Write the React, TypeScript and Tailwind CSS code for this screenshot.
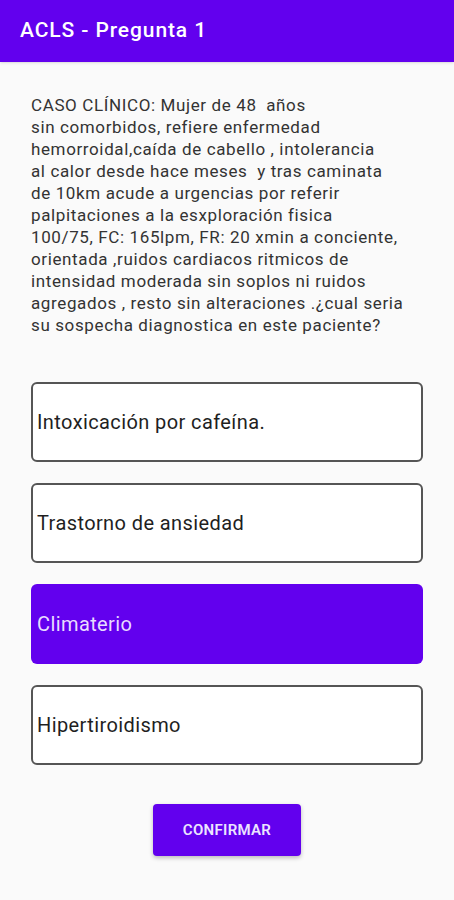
import { useState } from 'react'

const question =
  'CASO CLÍNICO: Mujer de 48  años\nsin comorbidos, refiere enfermedad\nhemorroidal,caída de cabello , intolerancia\nal calor desde hace meses  y tras caminata\nde 10km acude a urgencias por referir\npalpitaciones a la esxploración fisica\n100/75, FC: 165lpm, FR: 20 xmin a conciente,\norientada ,ruidos cardiacos ritmicos de\nintensidad moderada sin soplos ni ruidos\nagregados , resto sin alteraciones .¿cual seria\nsu sospecha diagnostica en este paciente?'

const options = [
  'Intoxicación por cafeína.',
  'Trastorno de ansiedad',
  'Climaterio',
  'Hipertiroidismo',
]

export default function App() {
  const [selected, setSelected] = useState(2)

  return (
    <div className="min-h-[900px] w-[454px] bg-[#fafafa] font-['Roboto',sans-serif]">
      <header className="h-[62px] bg-[#6200ee] px-5 flex items-center shadow-sm">
        <h1 className="text-[21px] font-medium text-white tracking-[0.9px]">ACLS - Pregunta 1</h1>
      </header>

      <main className="px-[31px] pt-[32px]">
        <p className="whitespace-pre text-[17px] leading-[22px] text-[#333333] tracking-[0.62px]">
          {question}
        </p>

        <div className="mt-[46px] flex flex-col gap-[21px]">
          {options.map((opt, i) => (
            <button
              key={opt}
              onClick={() => setSelected(i)}
              className={
                i === selected
                  ? 'h-[80px] w-[392px] rounded-[6px] bg-[#6200ee] px-[6px] text-left text-[20px] tracking-[0.4px] text-[#e8dcff] flex items-center'
                  : 'h-[80px] w-[392px] rounded-[6px] border-2 border-[#555555] bg-white px-[4px] text-left text-[20px] tracking-[0.4px] text-[#1f1f1f] flex items-center'
              }
            >
              {opt}
            </button>
          ))}
        </div>

        <div className="mt-[39px] flex justify-center">
          <button className="h-[52px] w-[148px] rounded-[4px] bg-[#6200ee] text-[15px] font-semibold tracking-[0.3px] text-[#ece4ff] shadow-[0_2px_4px_rgba(0,0,0,0.25)]">
            CONFIRMAR
          </button>
        </div>
      </main>
    </div>
  )
}
